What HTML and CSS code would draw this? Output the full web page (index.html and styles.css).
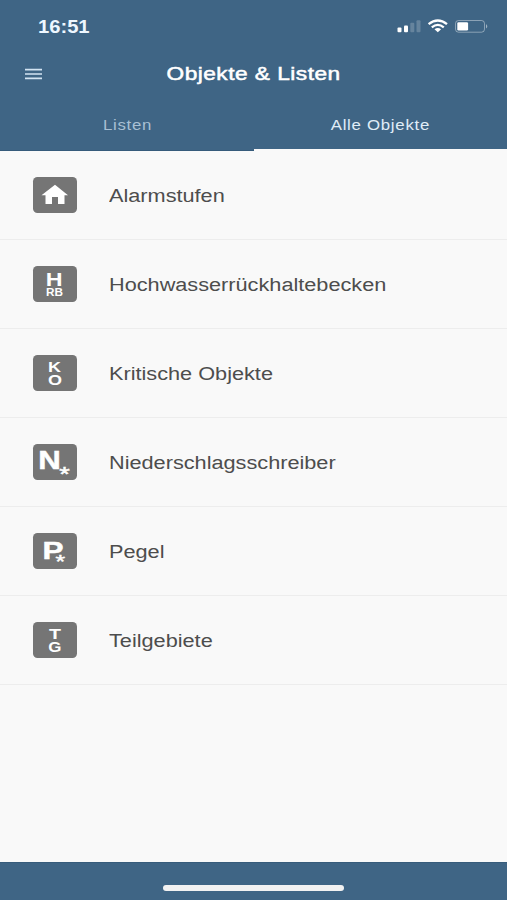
FILE: index.html
```html
<!DOCTYPE html>
<html lang="de">
<head>
<meta charset="utf-8">
<title>Objekte &amp; Listen</title>
<link rel="stylesheet" href="styles.css">
</head>
<body>
<div class="app">
  <header class="header">
    <div class="status">
      <span class="time wide">16:51</span>
      <svg class="status-icons" width="92" height="16" viewBox="0 0 92 16">
        <g fill="#fff">
          <rect x="0.5" y="9.5" width="4" height="4.8" rx="1"/>
          <rect x="7" y="7.5" width="4" height="6.8" rx="1"/>
          <g opacity=".2"><rect x="13.3" y="4.8" width="4" height="9.5" rx="1"/><rect x="19.5" y="2.3" width="4" height="12" rx="1"/></g>
        </g>
        <g fill="none" stroke="#fff" stroke-width="2.3">
          <path d="M31.6 6.2Q40.8-1.2 50 6.2"/>
          <path d="M34.8 9.3Q40.8 4.4 46.8 9.3"/>
        </g>
        <path d="M37.5 11.3Q40.8 8.8 44.1 11.3L40.8 14.2Z" fill="#fff"/>
        <rect x="58.5" y="2.5" width="29" height="11.7" rx="3" fill="none" stroke="#fff" stroke-opacity=".4"/>
        <rect x="60.3" y="4.2" width="10.8" height="8.3" rx="1.3" fill="#fff"/>
        <path d="M89 6q2.600 2.300 0 4.600z" fill="#fff" opacity=".5"/>
      </svg>
    </div>
    <div class="titlebar">
      <svg class="menu" width="17" height="12" viewBox="0 0 17 12"><path d="M0 1.700h17M0 6h17M0 10.300h17" stroke="#d3e4f2" stroke-width="1.700"/></svg>
      <h1 class="title wide">Objekte &amp; Listen</h1>
    </div>
    <nav class="tabs">
      <div class="tab"><span class="wide">Listen</span></div>
      <div class="tab active"><span class="wide">Alle Objekte</span></div>
    </nav>
  </header>
  <main class="list">
    <div class="row">
      <svg class="badge" viewBox="0 0 44 36"><path d="M22 7.800L35 18.300H31.500V27H25V20H19V27H12.500V18.300H8.500Z" fill="#fff"/></svg>
      <span class="label wide">Alarmstufen</span>
    </div>
    <div class="row">
      <svg class="badge" viewBox="0 0 44 36"><text x="12.800" y="19.500" font-size="19" textLength="16.800" lengthAdjust="spacingAndGlyphs">H</text><text x="13" y="30.300" font-size="10" textLength="17" lengthAdjust="spacingAndGlyphs">RB</text></svg>
      <span class="label wide">Hochwasserrückhaltebecken</span>
    </div>
    <div class="row">
      <svg class="badge" viewBox="0 0 44 36"><text x="15" y="17.300" font-size="15.500" textLength="13" lengthAdjust="spacingAndGlyphs">K</text><text x="15" y="30.300" font-size="15.500" textLength="14" lengthAdjust="spacingAndGlyphs">O</text></svg>
      <span class="label wide">Kritische Objekte</span>
    </div>
    <div class="row">
      <svg class="badge heavy" viewBox="0 0 44 36"><text x="5.300" y="24.800" font-size="25" textLength="22.500" lengthAdjust="spacingAndGlyphs">N</text><text class="star" x="26.300" y="36.800" font-size="20" textLength="10.500" lengthAdjust="spacingAndGlyphs">*</text></svg>
      <span class="label wide">Niederschlagsschreiber</span>
    </div>
    <div class="row">
      <svg class="badge heavy" viewBox="0 0 44 36"><text x="9.600" y="26.200" font-size="24.500" textLength="21" lengthAdjust="spacingAndGlyphs">P</text><text class="star" x="22.600" y="35.300" font-size="18" textLength="9.600" lengthAdjust="spacingAndGlyphs">*</text></svg>
      <span class="label wide">Pegel</span>
    </div>
    <div class="row">
      <svg class="badge" viewBox="0 0 44 36"><text x="16" y="17.300" font-size="15.500" textLength="12" lengthAdjust="spacingAndGlyphs">T</text><text x="15.300" y="30.300" font-size="15.500" textLength="13.200" lengthAdjust="spacingAndGlyphs">G</text></svg>
      <span class="label wide">Teilgebiete</span>
    </div>
  </main>
  <footer class="footer"><div class="home-indicator"></div></footer>
</div>
</body>
</html>
```
FILE: styles.css
```css
* { box-sizing: border-box; }
body {
  margin: 0;
  font-family: "Liberation Sans", Arial, sans-serif;
  background: #f9f9f9;
}
.app {
  display: flex;
  flex-direction: column;
  width: 507px;
  height: 900px;
  overflow: hidden;
}
/* Extended letterforms */
.wide {
  display: inline-block;
  white-space: nowrap;
  transform: scaleX(1.2);
}
.header {
  height: 151px;
  flex: none;
  background: #3f6585;
  color: #fff;
}
.status {
  display: flex;
  align-items: center;
  justify-content: space-between;
  height: 52px;
  padding: 0 18px 0 38px;
}
.time {
  padding-top: 2px;
  font-size: 18px;
  font-weight: bold;
  color: #eef7ff;
  transform: scaleX(1.12);
  transform-origin: left;
}
.titlebar {
  display: grid;
  grid-template-columns: 25px 457px 25px;
  align-items: center;
  height: 44px;
}
.menu { margin-left: 25px; }
.title {
  margin: 0;
  justify-self: center;
  font-size: 18.5px;
  font-weight: normal;
  line-height: 22px;
  letter-spacing: 0.4px;
  -webkit-text-stroke: 0.5px #fff;
  transform: translateX(0.5px) scaleX(1.225);
}
.tabs {
  display: flex;
  height: 55px;
}
.tab {
  flex: 1;
  display: flex;
  justify-content: center;
  padding: 20px 0 0 1px;
  font-size: 14px;
  line-height: 18px;
  letter-spacing: 0.6px;
  color: #a9c0d4;
  border-bottom: 1px solid #365b7b;
}
.tab.active {
  color: #e0edf8;
  border-bottom: 2px solid #f9f9f9;
}
.list { flex: 1; }
.row {
  display: flex;
  align-items: center;
  height: 89px;
  padding-left: 33px;
  border-bottom: 1px solid #ededed;
}
.badge {
  flex: none;
  width: 44px;
  height: 36px;
  margin-right: 32px;
  border-radius: 4.5px;
  background: #757575;
  fill: #fff;
  font-weight: bold;
  overflow: visible;
}
.heavy text {
  stroke: #fff;
  stroke-width: 0.5px;
}
.heavy .star { font-weight: normal; }
.label {
  padding-top: 2px;
  font-size: 18px;
  line-height: 24px;
  color: #4d4d4d;
  transform: scaleX(1.205);
  transform-origin: left;
}
.footer {
  display: flex;
  justify-content: center;
  height: 38px;
  padding-top: 22px;
  background: #3f6585;
  border-top: 1px solid #375c7b;
}
.home-indicator {
  width: 181px;
  height: 6px;
  border-radius: 3px;
  background: #f2f2f2;
}
```
